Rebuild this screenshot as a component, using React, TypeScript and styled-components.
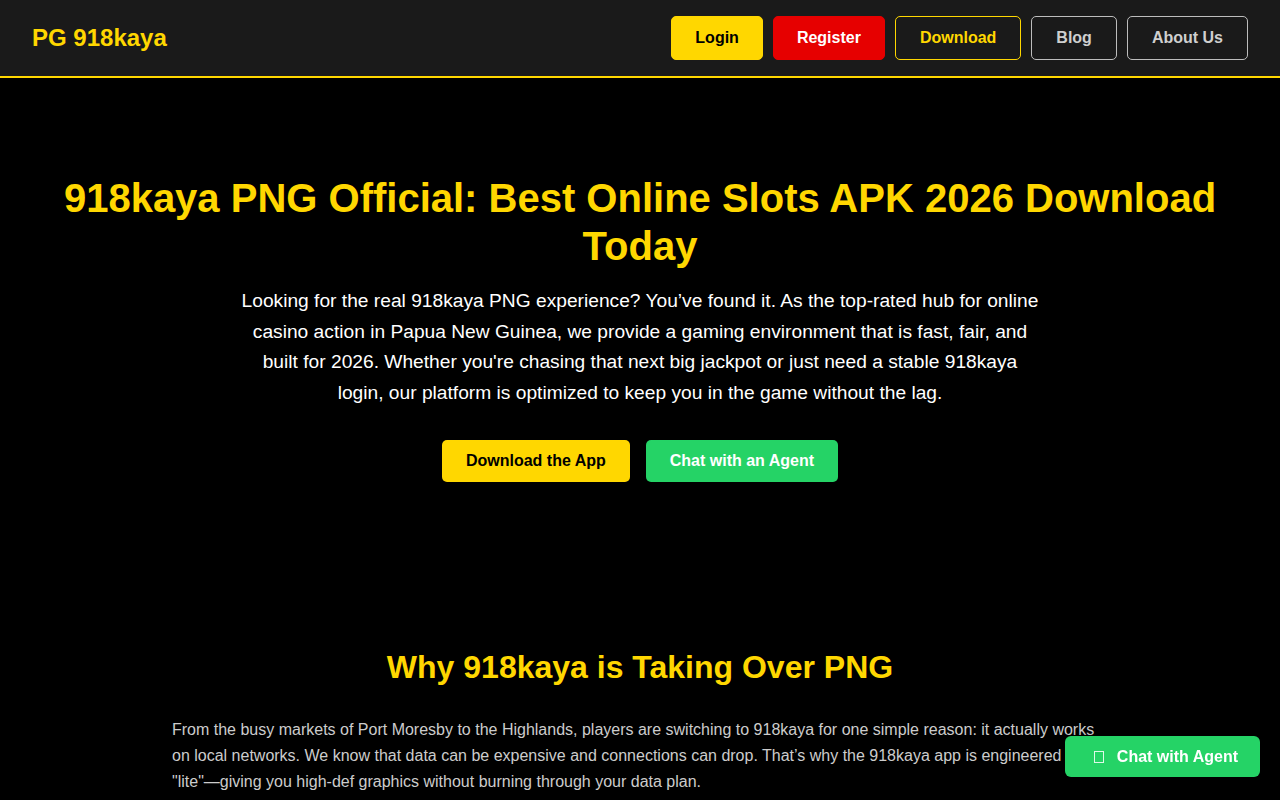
import React from "react";
import styled, { createGlobalStyle } from "styled-components";

const GlobalStyle = createGlobalStyle`
  html, body { margin: 0; padding: 0; background: #000; }
  body { font-family: "Liberation Sans", Arial, sans-serif; color: #fff; }
  * { box-sizing: border-box; }
`;

const Header = styled.header`
  display: flex;
  align-items: center;
  justify-content: space-between;
  height: 78px;
  padding: 0 32px;
  background: #1a1a1a;
  border-bottom: 2px solid #ffd700;
`;

const Logo = styled.div`
  color: #ffd700;
  font-size: 24px;
  font-weight: 700;
`;

const Nav = styled.nav`
  display: flex;
  gap: 10px;
`;

type Variant = "gold" | "red" | "outlineGold" | "outline";

const NavButton = styled.a<{ $variant: Variant }>`
  display: inline-flex;
  align-items: center;
  height: 44px;
  padding: 0 ${(p) => (p.$variant === "gold" || p.$variant === "red" ? "23px" : "24px")};
  border-radius: 5px;
  font-size: 16px;
  font-weight: 700;
  text-decoration: none;
  cursor: pointer;
  border: 1px solid
    ${(p) =>
      p.$variant === "gold"
        ? "#ffd700"
        : p.$variant === "red"
        ? "#e60000"
        : p.$variant === "outlineGold"
        ? "#ffd700"
        : "#bdbdbd"};
  background: ${(p) =>
    p.$variant === "gold" ? "#ffd700" : p.$variant === "red" ? "#e60000" : "transparent"};
  color: ${(p) =>
    p.$variant === "gold"
      ? "#000"
      : p.$variant === "red"
      ? "#fff"
      : p.$variant === "outlineGold"
      ? "#ffd700"
      : "#cfcfcf"};
`;

const Hero = styled.section`
  display: flex;
  flex-direction: column;
  align-items: center;
  padding: 96px 20px 0;
  text-align: center;
`;

const Title = styled.h1`
  margin: 0 0 16px;
  color: #ffd700;
  font-size: 40px;
  line-height: 1.2;
  font-weight: 700;
`;

const Lead = styled.p`
  margin: 0;
  max-width: 800px;
  font-size: 19.2px;
  line-height: 1.6;
  color: #fff;
`;

const CtaRow = styled.div`
  display: flex;
  gap: 16px;
  margin-top: 31px;
`;

const CtaButton = styled.a<{ $green?: boolean }>`
  display: inline-flex;
  align-items: center;
  height: 42px;
  padding: 0 24px;
  border-radius: 5px;
  font-size: 16px;
  font-weight: 700;
  text-decoration: none;
  background: ${(p) => (p.$green ? "#25d366" : "#ffd700")};
  color: ${(p) => (p.$green ? "#fff" : "#000")};
`;

const Section = styled.section`
  max-width: 960px;
  margin: 0 auto;
  padding: 166px 12px 40px;
`;

const SectionTitle = styled.h2`
  margin: 0 0 31px;
  text-align: center;
  color: #ffd700;
  font-size: 32px;
  line-height: 1.2;
  font-weight: 700;
`;

const Body = styled.p`
  margin: 0;
  font-size: 16px;
  line-height: 1.625;
  color: #cccccc;
`;

const FloatChat = styled.a`
  position: fixed;
  right: 20px;
  bottom: 23px;
  display: flex;
  align-items: center;
  gap: 13px;
  height: 41px;
  padding: 0 22px 0 29px;
  border-radius: 6px;
  background: #25d366;
  color: #fff;
  font-size: 16px;
  font-weight: 700;
  text-decoration: none;
  box-shadow: 0 2px 8px rgba(0, 0, 0, 0.3);
`;

const Tofu = styled.span`
  display: inline-block;
  width: 10px;
  height: 12px;
  border: 1px solid rgba(255, 255, 255, 0.85);
`;

export default function App() {
  return (
    <>
      <GlobalStyle />
      <Header>
        <Logo>PG 918kaya</Logo>
        <Nav>
          <NavButton $variant="gold">Login</NavButton>
          <NavButton $variant="red">Register</NavButton>
          <NavButton $variant="outlineGold">Download</NavButton>
          <NavButton $variant="outline">Blog</NavButton>
          <NavButton $variant="outline">About Us</NavButton>
        </Nav>
      </Header>
      <Hero>
        <Title>
          918kaya PNG Official: Best Online Slots APK 2026 Download Today
        </Title>
        <Lead>
          Looking for the real 918kaya PNG experience? You’ve found it. As the top-rated hub for
          online casino action in Papua New Guinea, we provide a gaming environment that is fast,
          fair, and built for 2026. Whether you're chasing that next big jackpot or just need a
          stable 918kaya login, our platform is optimized to keep you in the game without the lag.
        </Lead>
        <CtaRow>
          <CtaButton>Download the App</CtaButton>
          <CtaButton $green>Chat with an Agent</CtaButton>
        </CtaRow>
      </Hero>
      <Section>
        <SectionTitle>Why 918kaya is Taking Over PNG</SectionTitle>
        <Body>
          From the busy markets of Port Moresby to the Highlands, players are switching to 918kaya
          for one simple reason: it actually works on local networks. We know that data can be
          expensive and connections can drop. That’s why the 918kaya app is engineered to be
          "lite"—giving you high-def graphics without burning through your data plan.
        </Body>
      </Section>
      <FloatChat>
        <Tofu />
        Chat with Agent
      </FloatChat>
    </>
  );
}
